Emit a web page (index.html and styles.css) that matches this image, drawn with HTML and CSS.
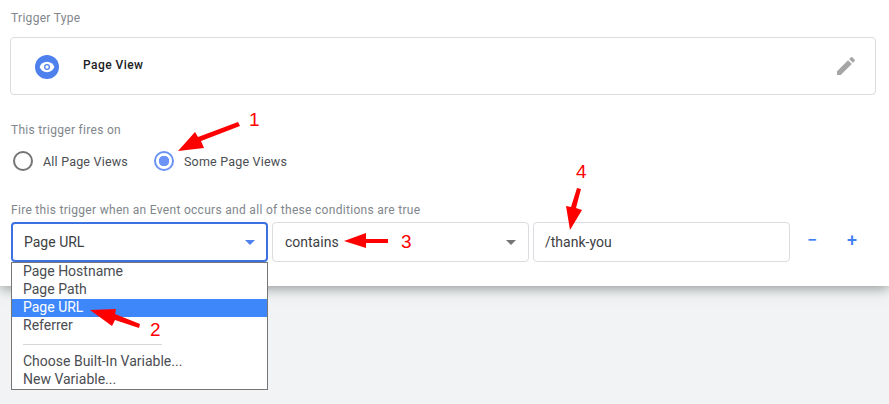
FILE: index.html
```
<!DOCTYPE html>
<html lang="en">
<head>
<meta charset="utf-8">
<title>Trigger Configuration</title>
<link rel="stylesheet" href="styles.css">
</head>
<body>
<main class="panel">
  <div class="label label-type">Trigger Type</div>
  <section class="type-card">
    <span class="type-icon">
      <svg viewBox="0 0 24 24" width="24" height="24">
        <circle cx="12" cy="12" r="12" fill="#4f81ee"/>
        <path d="M12 6.800c-3.600 0-6.200 2.200-7.400 5.200 1.200 3 3.800 5.200 7.400 5.200s6.200-2.200 7.400-5.200C18.200 9 15.600 6.800 12 6.800z" fill="#fff"/>
        <circle cx="12" cy="12" r="3" fill="#4f81ee"/>
        <circle cx="12" cy="12" r="1.700" fill="#fff"/>
      </svg>
    </span>
    <span class="type-name">Page View</span>
    <svg class="pencil" viewBox="0 0 24 24" width="24" height="24">
      <path d="M3 17.250V21h3.750L17.810 9.940l-3.750-3.750L3 17.250zM20.710 7.040a1 1 0 0 0 0-1.410l-2.340-2.340a1 1 0 0 0-1.410 0l-1.830 1.830 3.750 3.750 1.830-1.830z" fill="#a6a6a6"/>
    </svg>
  </section>

  <div class="label label-fires">This trigger fires on</div>
  <div class="radios">
    <label class="radio"><span class="dot"></span>All Page Views</label>
    <label class="radio radio-on"><span class="dot"></span>Some Page Views</label>
  </div>

  <div class="label label-cond">Fire this trigger when an Event occurs and all of these conditions are true</div>
  <div class="cond-row">
    <div class="field field-select field-focus">Page URL<span class="caret"></span></div>
    <div class="field field-select">contains<span class="caret"></span></div>
    <div class="field field-input">/thank-you</div>
    <div class="row-btns"><span class="row-btn">&minus;</span><span class="row-btn">+</span></div>
  </div>
</main>

<ul class="menu">
  <li>Page Hostname</li>
  <li>Page Path</li>
  <li class="menu-on">Page URL</li>
  <li>Referrer</li>
  <li class="menu-sep"></li>
  <li>Choose Built-In Variable...</li>
  <li>New Variable...</li>
</ul>

<svg class="notes" viewBox="0 0 889 404" width="889" height="404">
  <g fill="#f00" stroke="none">
    <path d="M240 126 L201 141 L204 148 L178 151 L195 132 L198 137 L238 122 Z"/>
    <path d="M139 328 L115 320 L112 326 L90 310 L116 309 L115 314 L140 324 Z"/>
    <path d="M388 239 L366 239 L366 233 L344 241 L366 248 L366 243 L388 243 Z"/>
    <path d="M581 189 L576 208 L582 210 L570 230 L566 206 L571 207 L577 188 Z"/>
  </g>
  <g class="note-nums" fill="#f00">
    <text x="249" y="126">1</text>
    <text x="150" y="336">2</text>
    <text x="401" y="248">3</text>
    <text x="576" y="178">4</text>
  </g>
</svg>
</body>
</html>
```

FILE: styles.css
```
* { box-sizing: border-box; }
html, body { margin: 0; padding: 0; }
body {
  width: 889px;
  height: 404px;
  overflow: hidden;
  position: relative;
  background: #f1f3f4;
  font-family: Roboto, "Liberation Sans", sans-serif;
  color: #3c4043;
}
.panel {
  height: 286px;
  padding: 11px 13px 0 10px;
  background: #fff;
  box-shadow: 0 2px 12px rgba(60, 64, 67, .55);
}
.label {
  padding-left: 1px;
  font-size: 12px;
  line-height: 14px;
  letter-spacing: .3px;
  color: #80868b;
}
.type-card {
  display: flex;
  align-items: center;
  height: 58px;
  margin-top: 12px;
  padding: 0 17px 0 24px;
  border: 1px solid #dadce0;
  border-radius: 4px;
}
.type-icon { display: flex; width: 24px; height: 24px; margin-top: 1px; }
.type-name {
  margin-left: 24px;
  margin-top: -2px;
  font-size: 12px;
  font-weight: 500;
  letter-spacing: .45px;
  color: #202124;
}
.pencil { margin-left: auto; }
.label-fires { margin-top: 28px; }
.radios { display: flex; gap: 26px; margin-top: 13px; padding-left: 3px; }
.radio {
  display: flex;
  align-items: center;
  gap: 10px;
  height: 22px;
  font-size: 12.500px;
  letter-spacing: .2px;
  color: #4a4d52;
}
.dot {
  width: 20px;
  height: 20px;
  border: 2px solid #757575;
  border-radius: 50%;
}
.radio-on .dot {
  border-color: #6c93f5;
  background: radial-gradient(circle, #6c93f5 0 5px, #fff 5.500px);
}
.label-cond { margin-top: 31px; }
.cond-row { display: flex; align-items: flex-start; margin-top: 5px; padding-left: 1px; }
.field {
  position: relative;
  display: flex;
  align-items: center;
  height: 40px;
  padding: 0 0 1px 12px;
  border: 1px solid #dadce0;
  border-radius: 4px;
  font-size: 14px;
  color: #3c4043;
}
.field-select { width: 257px; }
.field-select + .field-select { margin-left: 4px; }
.field-input { width: 257px; margin-left: 4px; padding-left: 11px; }
.field-focus { border: 2px solid #3b71e0; padding-left: 11px; }
.caret {
  position: absolute;
  right: 12px;
  top: 50%;
  margin-top: -2px;
  border-left: 5px solid transparent;
  border-right: 5px solid transparent;
  border-top: 5px solid #757575;
}
.field-focus .caret { right: 11px; border-top-color: #4f81ee; }
.row-btns {
  display: flex;
  width: 80px;
  margin-left: 2px;
  height: 36px;
  align-items: center;
  justify-content: space-between;
  padding: 0 14px 0 14px;
  font-size: 18px;
  font-weight: 500;
  color: #3f80f0;
}
.row-btn { width: 12px; text-align: center; line-height: 36px; }
.menu {
  position: absolute;
  left: 11px;
  top: 262px;
  width: 257px;
  height: 128px;
  margin: 0;
  padding: 0;
  list-style: none;
  background: #fff;
  border: 1px solid #767676;
  font-size: 14px;
  line-height: 16px;
  color: #4a4d52;
}
.menu li { height: 18px; padding-left: 11px; }
.menu .menu-on { background: #3e87fb; color: #fff; }
.menu .menu-sep {
  position: relative;
}
.menu .menu-sep::after {
  content: "";
  position: absolute;
  left: 11px;
  top: 9px;
  width: 139px;
  border-top: 1px solid #d6d6d6;
}
.notes { position: absolute; left: 0; top: 0; pointer-events: none; }
.note-nums { font-family: "Liberation Sans", sans-serif; font-size: 19px; }
```
